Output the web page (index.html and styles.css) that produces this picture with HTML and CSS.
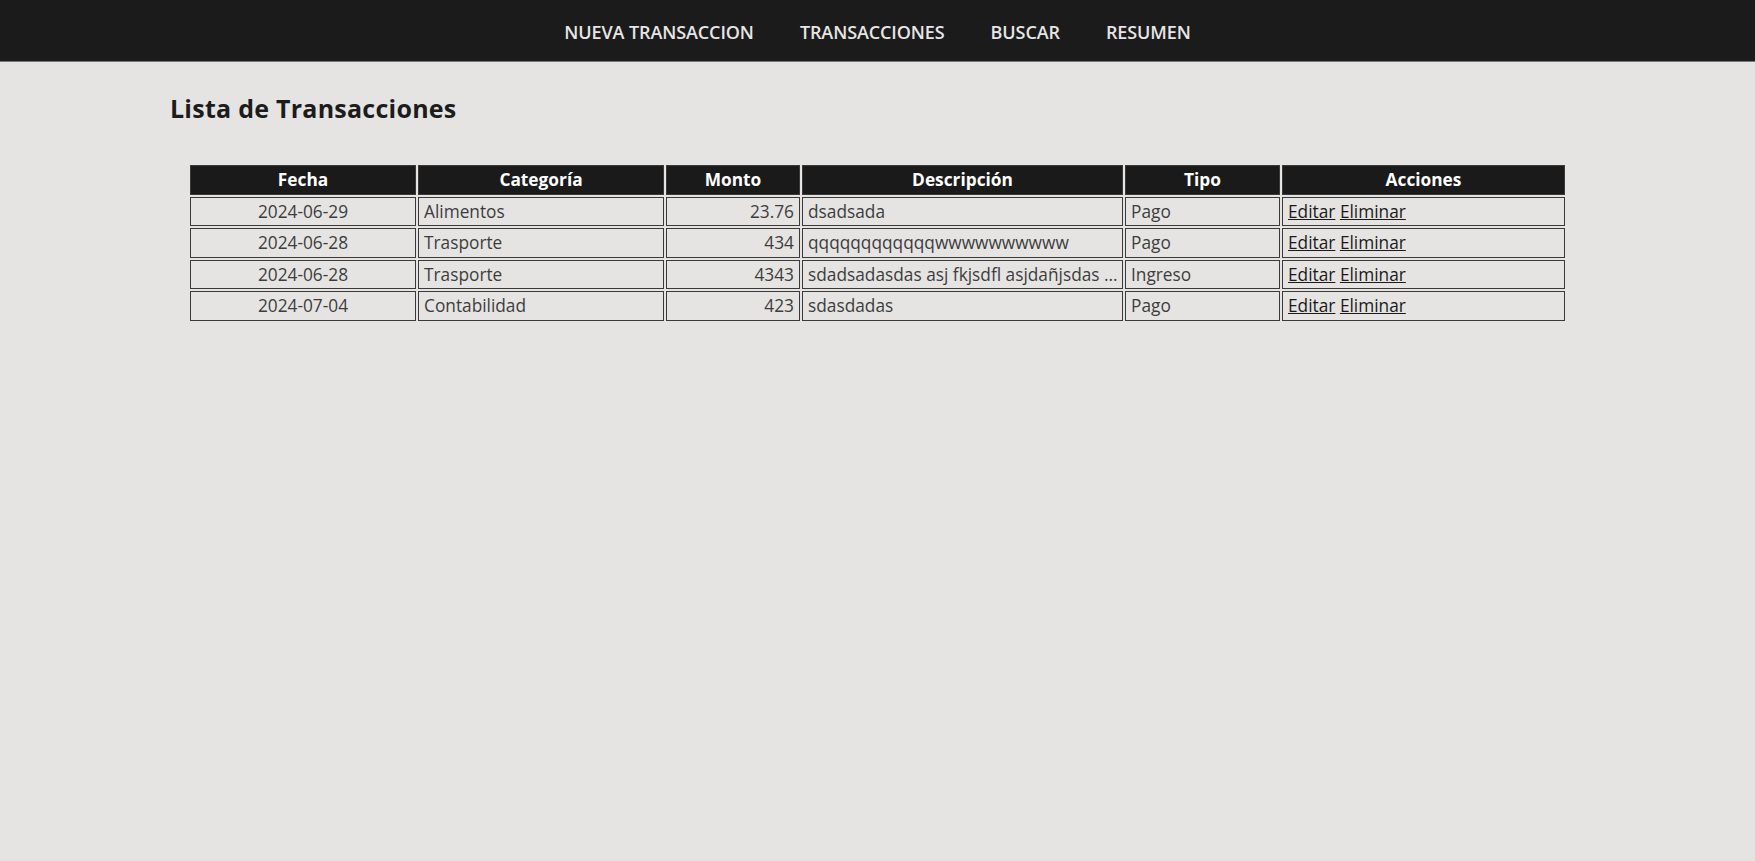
FILE: index.html
```html
<!DOCTYPE html>
<html lang="es">
<head>
<meta charset="utf-8">
<title>Lista de Transacciones</title>
<link rel="stylesheet" href="styles.css">
</head>
<body>
<nav class="topnav">
  <ul class="topnav-list">
    <li><a href="#" class="topnav-link">NUEVA TRANSACCION</a></li>
    <li><a href="#" class="topnav-link">TRANSACCIONES</a></li>
    <li><a href="#" class="topnav-link">BUSCAR</a></li>
    <li><a href="#" class="topnav-link">RESUMEN</a></li>
  </ul>
</nav>
<main class="content">
  <h1 class="page-title">Lista de Transacciones</h1>
  <table class="tx-table">
    <thead>
      <tr><th class="c-fecha">Fecha</th><th class="c-cat">Categoría</th><th class="c-monto">Monto</th><th class="c-desc">Descripción</th><th class="c-tipo">Tipo</th><th class="c-acc">Acciones</th></tr>
    </thead>
    <tbody>
      <tr><td class="center">2024-06-29</td><td>Alimentos</td><td class="right">23.76</td><td>dsadsada</td><td>Pago</td><td><a href="#">Editar</a> <a href="#">Eliminar</a></td></tr>
      <tr><td class="center">2024-06-28</td><td>Trasporte</td><td class="right">434</td><td>qqqqqqqqqqqqwwwwwwwwww</td><td>Pago</td><td><a href="#">Editar</a> <a href="#">Eliminar</a></td></tr>
      <tr><td class="center">2024-06-28</td><td>Trasporte</td><td class="right">4343</td><td>sdadsadasdas asj fkjsdfl asjdañjsdas ...</td><td>Ingreso</td><td><a href="#">Editar</a> <a href="#">Eliminar</a></td></tr>
      <tr><td class="center">2024-07-04</td><td>Contabilidad</td><td class="right">423</td><td>sdasdadas</td><td>Pago</td><td><a href="#">Editar</a> <a href="#">Eliminar</a></td></tr>
    </tbody>
  </table>
</main>
</body>
</html>
```
FILE: styles.css
```css
* { box-sizing: border-box; }
html, body { margin: 0; padding: 0; }
body {
  background: #e5e4e3;
  font-family: "Open Sans", "Noto Sans", sans-serif;
  color: #222;
  min-height: 100vh;
}
.topnav {
  background: #1b1b1b;
  height: 62px;
  border-bottom: 1px solid #777;
}
.topnav-list {
  list-style: none;
  margin: 0;
  padding: 2px 0 0;
  height: 100%;
  display: flex;
  justify-content: center;
  align-items: center;
  gap: 46px;
}
.topnav-link {
  color: #e6e6e6;
  text-decoration: none;
  font-size: 18px;
  font-weight: 600;
  letter-spacing: -0.1px;
}
.content {
  padding: 0 170px;
}
.page-title {
  margin: 0;
  padding-top: 30px;
  font-size: 25px;
  font-weight: 700;
  color: #1c1c1c;
  line-height: 32.5px;
  letter-spacing: 0.25px;
}
.tx-table {
  margin: 38px auto 0;
  width: 1379px;
  table-layout: fixed;
  border-collapse: separate;
  border-spacing: 2px;
  font-size: 17.3px;
}
.c-fecha { width: 226px; }
.c-cat { width: 246px; }
.c-monto { width: 134px; }
.c-desc { width: 321px; }
.c-tipo { width: 155px; }
.c-acc { width: 283px; }
.tx-table th,
.tx-table td {
  border: 1px solid #3a3a3a;
  height: 29.5px;
  padding: 1px 5px 0;
  line-height: 20px;
  white-space: nowrap;
  overflow: hidden;
}
.tx-table th {
  background: #1a1a1a;
  color: #fff;
  font-weight: 700;
  text-align: center;
  height: 30px;
}
.tx-table td {
  color: #3d3d3d;
  text-align: left;
}
.tx-table td.center { text-align: center; }
.tx-table td.right { text-align: right; }
.tx-table td a {
  color: #1a1a1a;
  text-decoration: underline;
}
```
